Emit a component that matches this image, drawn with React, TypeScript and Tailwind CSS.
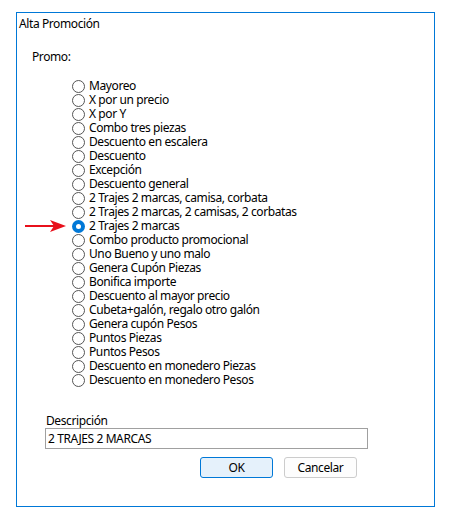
import React from "react";

const items = [
  "Mayoreo",
  "X por un precio",
  "X por Y",
  "Combo tres piezas",
  "Descuento en escalera",
  "Descuento",
  "Excepción",
  "Descuento general",
  "2 Trajes 2 marcas, camisa, corbata",
  "2 Trajes 2 marcas, 2 camisas, 2 corbatas",
  "2 Trajes 2 marcas",
  "Combo producto promocional",
  "Uno Bueno y uno malo",
  "Genera Cupón Piezas",
  "Bonifica importe",
  "Descuento al mayor precio",
  "Cubeta+galón, regalo otro galón",
  "Genera cupón Pesos",
  "Puntos Piezas",
  "Puntos Pesos",
  "Descuento en monedero Piezas",
  "Descuento en monedero Pesos",
];

function Radio({ checked }: { checked: boolean }) {
  return (
    <svg width="13" height="13" viewBox="0 0 13 13" className="shrink-0">
      {checked ? (
        <>
          <circle cx="6.5" cy="6.5" r="6.5" fill="#0078d7" />
          <circle cx="6.5" cy="6.5" r="2.5" fill="#ffffff" />
        </>
      ) : (
        <circle cx="6.5" cy="6.5" r="6" fill="#ffffff" stroke="#555555" strokeWidth="1" />
      )}
    </svg>
  );
}

export default function App() {
  return (
    <div
      className="w-[451px] h-[520px] bg-white pt-[12px] pl-[16px] text-[12px] tracking-[-0.4px] text-black"
      style={{ fontFamily: '"Noto Sans", "Open Sans", sans-serif' }}
    >
      <div className="relative w-[419px] h-[495px] border border-[#0078d7] flex flex-col">
        <div className="mt-[4px] pl-[2px] leading-[14px] h-[14px]">Alta Promoción</div>
        <div className="mt-[19px] pl-[15px] leading-[14px] h-[14px]">Promo:</div>
        <div className="mt-[15px] pl-[55px] flex flex-col">
          {items.map((it, i) => (
            <div key={i} className="flex items-center h-[14px] leading-[14px] whitespace-nowrap">
              <Radio checked={i === 10} />
              <span className="ml-[4px]">{it}</span>
            </div>
          ))}
        </div>
        <div className="mt-[27px] pl-[29px] leading-[14px] h-[14px]">Descripción</div>
        <div className="ml-[28px] w-[323px] h-[21px] border border-[#a0a0a0] flex items-center pl-[2px] leading-[14px]">
          2 TRAJES 2 MARCAS
        </div>
        <div className="mt-[8px] ml-[183px] flex gap-[11px]">
          <div className="w-[73px] h-[21px] rounded-[3px] border border-[#0078d7] bg-[#e5f1fb] flex items-center justify-center">
            OK
          </div>
          <div className="w-[73px] h-[21px] rounded-[3px] border border-[#cccccc] bg-[#fdfdfd] flex items-center justify-center">
            Cancelar
          </div>
        </div>
        <svg
          className="absolute left-[8px] top-[206px]"
          width="42"
          height="14"
          viewBox="0 0 42 14"
        >
          <line x1="0" y1="7" x2="32" y2="7" stroke="#e8101b" strokeWidth="2" />
          <polygon points="25,1 41,7 25,13 29,7" fill="#e8101b" />
        </svg>
      </div>
    </div>
  );
}
